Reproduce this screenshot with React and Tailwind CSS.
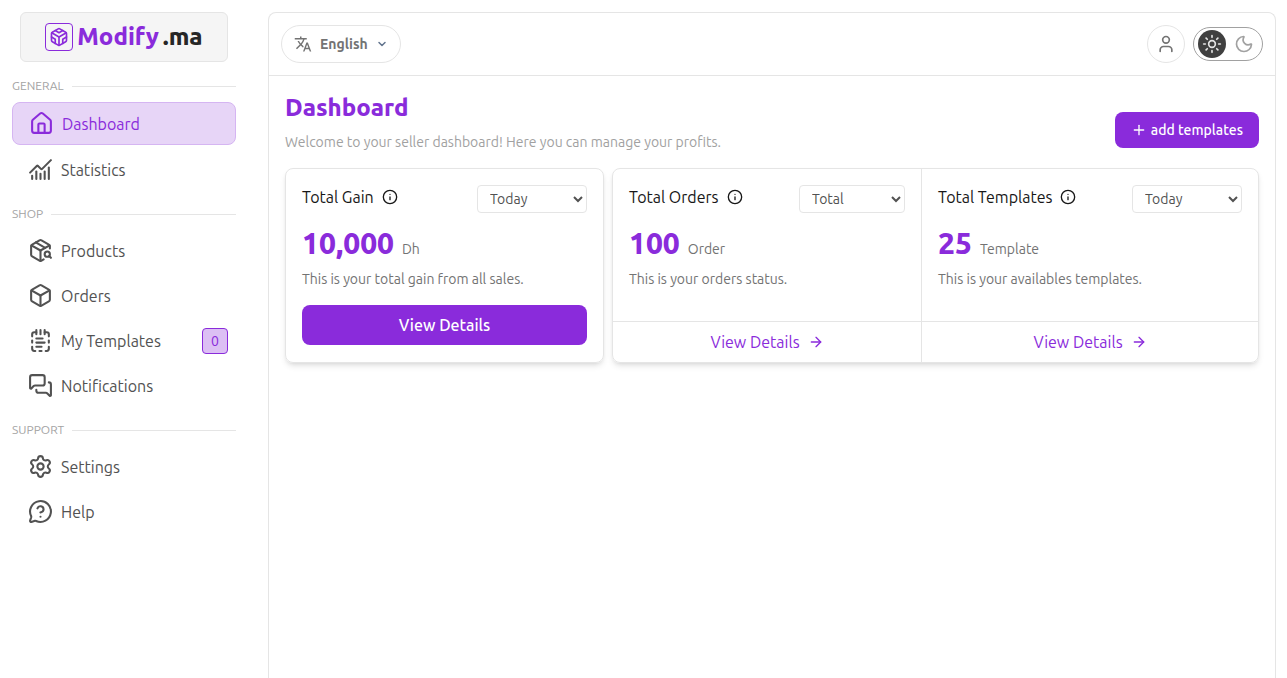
import { ArrowRight, Box, ChartNoAxesCombined, ChevronDown, Codesandbox, House, Info, MessageCircleQuestionMark, MessagesSquare, Moon, NotepadTextDashed, PackageSearch, Plus, Settings, Sun, User } from "lucide-react";
import { MdTranslate } from "react-icons/md";

const groups = [
  { title: "GENERAL", items: [{ label: "Dashboard", icon: House, active: true }, { label: "Statistics", icon: ChartNoAxesCombined }] },
  { title: "SHOP", items: [{ label: "Products", icon: PackageSearch }, { label: "Orders", icon: Box }, { label: "My Templates", icon: NotepadTextDashed, badge: 0 }, { label: "Notifications", icon: MessagesSquare }] },
  { title: "SUPPORT", items: [{ label: "Settings", icon: Settings }, { label: "Help", icon: MessageCircleQuestionMark }] },
];

function NavGroup({ title, items }) {
  return (
    <section>
      <h2 className="flex h-4 items-center gap-2 text-xs text-[#a3a3a3]">
        {title}
        <span className="h-px flex-1 bg-neutral-200" />
      </h2>
      <ul className="mt-[6px] flex flex-col">
        {items.map(({ label, icon: Icon, active, badge }) => (
          <li key={label}>
            <a href="#" className={active ? "my-[2px] flex h-[43px] items-center gap-2 rounded-lg border border-[#d5b5f2] bg-[#e7d5f7] px-4 text-[#8a2bdb]" : "flex h-[45px] items-center gap-2 rounded-lg px-4 text-[#525252]"}>
              <Icon className="size-[25px]" strokeWidth={2} />
              <span className="flex-1 whitespace-nowrap text-base">{label}</span>
              {badge !== undefined && <span className="-mr-2 flex size-[26px] items-center justify-center rounded border border-[#8a2bdb] bg-[#dcbff4] text-sm text-[#8a2bdb]">{badge}</span>}
            </a>
          </li>
        ))}
      </ul>
    </section>
  );
}

function Stat({ id, title, period, wide, value, unit, note }) {
  return (
    <div className="px-4 pt-4">
      <div className="flex items-start justify-between">
        <label htmlFor={id} className="flex h-6 items-center gap-2 whitespace-nowrap text-base text-neutral-900">
          {title}
          <Info className="size-4" />
        </label>
        <select id={id} defaultValue={period} className={wide ? "h-7 w-[110px] rounded border border-neutral-200 bg-white px-2 text-sm text-neutral-600" : "h-7 w-[106px] rounded border border-neutral-200 bg-white px-2 text-sm text-neutral-600"}>
          <option>Today</option>
          <option>Total</option>
        </select>
      </div>
      <p className="mt-3 flex items-baseline gap-2 text-sm text-neutral-500">
        <strong className="text-3xl leading-9 font-extrabold text-[#8a2bdb]">{value}</strong>
        {unit}
      </p>
      <p className="mt-2 text-sm text-neutral-500">{note}</p>
    </div>
  );
}

function DetailsLink() {
  return (
    <a href="#" className="flex h-[41px] items-center justify-center gap-2 border-t border-neutral-200 text-base text-[#8a2bdb]">
      View Details
      <ArrowRight className="size-4" strokeWidth={2} />
    </a>
  );
}

export default function App() {
  return (
    <div className="flex min-h-screen bg-white font-['Ubuntu','Noto_Sans',sans-serif]">
      <aside className="w-[268px] shrink-0 py-3 pr-8 pl-3">
        <a href="#" className="mx-2 flex h-[50px] items-center justify-center gap-1 rounded-md border border-neutral-200 bg-neutral-100 text-2xl font-extrabold text-[#8a2bdb]">
          <span className="flex size-7 items-center justify-center rounded border border-[#8a2bdb]"><Codesandbox className="size-5" /></span>
          <span>Modify</span>
          <span className="text-neutral-800">.ma</span>
        </a>
        <nav className="mt-4 flex flex-col gap-[14px]">
          {groups.map((g) => <NavGroup key={g.title} {...g} />)}
        </nav>
      </aside>
      <div className="mt-3 mr-[11px] flex min-w-0 flex-1 flex-col rounded-t-lg border border-b-0 border-neutral-200">
        <header className="flex h-[63px] items-center justify-between border-b border-neutral-200 px-3">
          <button className="flex h-[38px] items-center gap-2 rounded-full border border-neutral-200 px-3 text-sm font-semibold text-neutral-500">
            <MdTranslate className="size-[18px]" />
            English
            <ChevronDown className="size-3 text-slate-500" strokeWidth={3} />
          </button>
          <div className="flex items-center gap-2">
            <button aria-label="Account" className="flex size-[38px] items-center justify-center rounded-full border border-neutral-200 text-neutral-500"><User className="size-5" /></button>
            <button aria-label="Toggle theme" className="flex h-[34px] items-center gap-1 rounded-full border border-neutral-400 px-1 text-neutral-400">
              <span className="flex size-7 items-center justify-center rounded-full bg-neutral-700 text-neutral-200"><Sun className="size-5" strokeWidth={2} /></span>
              <span className="flex size-7 items-center justify-center"><Moon className="size-5" strokeWidth={2} /></span>
            </button>
          </div>
        </header>
        <main className="px-4">
          <div className="flex items-end justify-between py-4">
            <div>
              <h1 className="text-2xl leading-8 font-extrabold text-[#8a2bdb]">Dashboard</h1>
              <p className="mt-2 text-sm text-neutral-400">Welcome to your seller dashboard! Here you can manage your profits.</p>
            </div>
            <button className="mb-1 flex h-9 items-center gap-1 rounded-lg bg-[#8a2bdb] px-4 text-sm font-medium text-white"><Plus className="size-4" strokeWidth={2} />add templates</button>
          </div>
          <div className="flex items-stretch gap-2">
            <section className="w-[319px] shrink-0 rounded-lg border border-neutral-200 shadow-md">
              <Stat id="gain" title="Total Gain" period="Today" wide value="10,000" unit="Dh" note="This is your total gain from all sales." />
              <div className="px-4 pt-4 pb-[17px]">
                <button className="h-10 w-full rounded-lg bg-[#8a2bdb] text-base font-medium text-white">View Details</button>
              </div>
            </section>
            <section className="flex min-w-0 flex-1 divide-x divide-neutral-200 rounded-lg border border-neutral-200 shadow-md">
              <div className="flex flex-[309] flex-col justify-between">
                <Stat id="orders" title="Total Orders" period="Total" value="100" unit="Order" note="This is your orders status." />
                <DetailsLink />
              </div>
              <div className="flex flex-[337] flex-col justify-between">
                <Stat id="templates" title="Total Templates" period="Today" wide value="25" unit="Template" note="This is your availables templates." />
                <DetailsLink />
              </div>
            </section>
          </div>
        </main>
      </div>
    </div>
  );
}
